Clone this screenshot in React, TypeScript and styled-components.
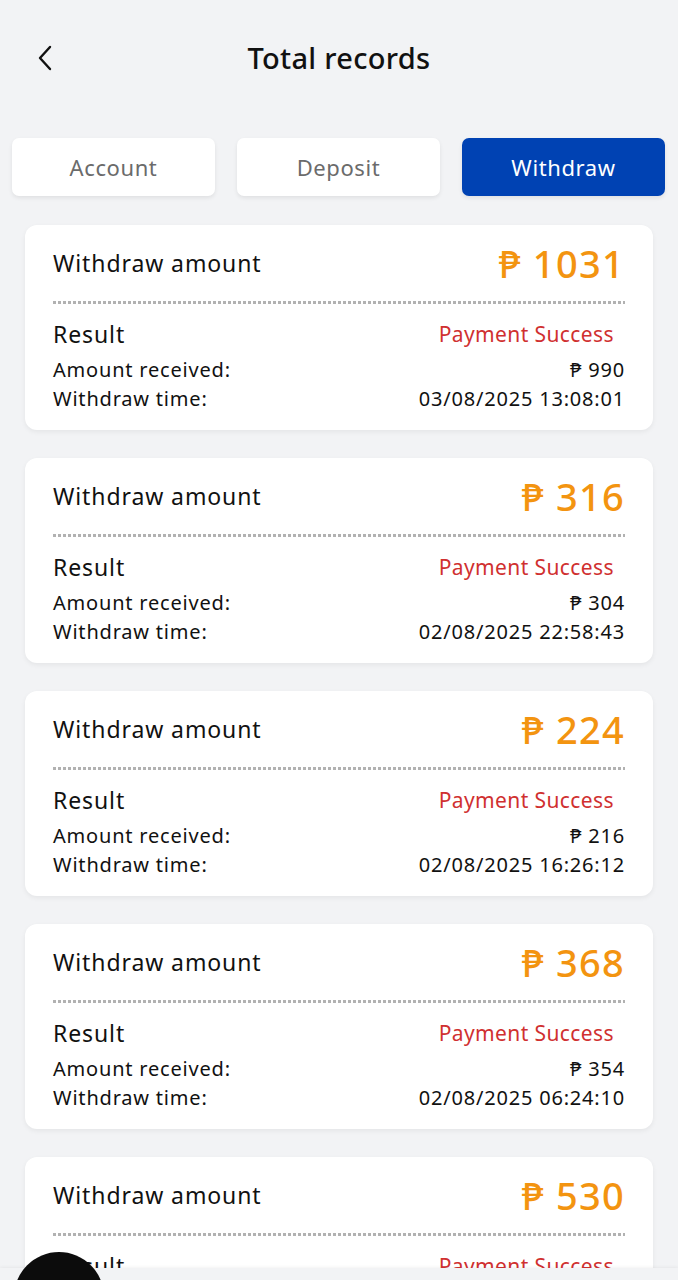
import * as React from "react";
import styled, { createGlobalStyle } from "styled-components";

const Global = createGlobalStyle`
  html, body {
    margin: 0;
    padding: 0;
    background: #f2f3f5;
    font-family: "Noto Sans", "Open Sans", sans-serif;
  }
`;

const Page = styled.div`
  width: 678px;
  height: 1280px;
  overflow: hidden;
  position: relative;
  background: #f2f3f5;
`;

const Header = styled.div`
  height: 114px;
  display: flex;
  align-items: center;
  justify-content: center;
  position: relative;
`;

const BackButton = styled.div`
  position: absolute;
  left: 33px;
  top: 44px;
  width: 24px;
  height: 28px;
  display: flex;
  align-items: center;
  justify-content: center;
`;

const Title = styled.h1`
  margin: 0;
  font-size: 29px;
  font-weight: 500;
  color: #111;
  letter-spacing: 0.3px;
`;

const Tabs = styled.div`
  display: grid;
  grid-template-columns: repeat(3, 203px);
  column-gap: 22px;
  padding: 24px 12px 0 12px;
`;

const Tab = styled.div<{ $active?: boolean }>`
  height: 58px;
  border-radius: 7px;
  display: flex;
  align-items: center;
  justify-content: center;
  font-size: 22px;
  letter-spacing: 0.6px;
  background: ${(p) => (p.$active ? "#0042b3" : "#ffffff")};
  color: ${(p) => (p.$active ? "#ffffff" : "#6b6b6b")};
  box-shadow: 0 2px 4px rgba(0, 0, 0, 0.08);
`;

const List = styled.div`
  display: flex;
  flex-direction: column;
  gap: 28px;
  padding: 29px 25px 0 25px;
`;

const Card = styled.div`
  background: #fff;
  border-radius: 12px;
  padding: 0 28px 17px 28px;
  box-shadow: 0 2px 5px rgba(0, 0, 0, 0.06);
`;

const TopRow = styled.div`
  display: flex;
  justify-content: space-between;
  align-items: center;
  height: 76px;
`;

const Label = styled.span`
  font-size: 23px;
  letter-spacing: 0.9px;
  color: #111;
`;

const Amount = styled.span`
  font-size: 38px;
  color: #f39410;
  font-weight: 500;
  letter-spacing: 1.3px;
`;

const Dots = styled.div`
  height: 3px;
  background: repeating-linear-gradient(
    to right,
    #9e9e9e 0 3px,
    transparent 3px 5px
  );
  opacity: 0.8;
`;

const ResultRow = styled.div`
  display: flex;
  justify-content: space-between;
  align-items: center;
  margin-top: 12px;
  height: 36px;
  padding-bottom: 3px;
`;

const Status = styled.span`
  font-size: 21px;
  letter-spacing: 0.4px;
  color: #d03030;
  margin-right: 11px;
`;

const InfoRow = styled.div`
  display: flex;
  justify-content: space-between;
  align-items: center;
  height: 29px;
  font-size: 20px;
  letter-spacing: 0.8px;
  color: #111;
`;

const BottomBar = styled.div`
  position: absolute;
  left: 0;
  right: 0;
  bottom: 0;
  height: 12px;
  background: #f2f3f5;
  box-shadow: 0 -1px 3px rgba(0, 0, 0, 0.05);
`;

const FloatBall = styled.div`
  position: absolute;
  left: 14px;
  top: 1252px;
  width: 90px;
  height: 90px;
  border-radius: 50%;
  background: #0c0c0c;
`;

type Rec = { amount: string; received: string; time: string };

const records: Rec[] = [
  { amount: "1031", received: "990", time: "03/08/2025 13:08:01" },
  { amount: "316", received: "304", time: "02/08/2025 22:58:43" },
  { amount: "224", received: "216", time: "02/08/2025 16:26:12" },
  { amount: "368", received: "354", time: "02/08/2025 06:24:10" },
  { amount: "530", received: "510", time: "02/08/2025 01:12:33" },
];

export default function App() {
  return (
    <Page>
      <Global />
      <Header>
        <BackButton>
          <svg width="16" height="26" viewBox="0 0 16 26" fill="none">
            <path d="M13 2 L3 13 L13 24" stroke="#111" strokeWidth="2.4" strokeLinecap="round" strokeLinejoin="round" />
          </svg>
        </BackButton>
        <Title>Total records</Title>
      </Header>
      <Tabs>
        <Tab>Account</Tab>
        <Tab>Deposit</Tab>
        <Tab $active>Withdraw</Tab>
      </Tabs>
      <List>
        {records.map((r) => (
          <Card key={r.time}>
            <TopRow>
              <Label>Withdraw amount</Label>
              <Amount>₱ {r.amount}</Amount>
            </TopRow>
            <Dots />
            <ResultRow>
              <Label>Result</Label>
              <Status>Payment Success</Status>
            </ResultRow>
            <InfoRow>
              <span>Amount received:</span>
              <span>₱ {r.received}</span>
            </InfoRow>
            <InfoRow>
              <span>Withdraw time:</span>
              <span>{r.time}</span>
            </InfoRow>
          </Card>
        ))}
      </List>
      <BottomBar />
      <FloatBall />
    </Page>
  );
}
